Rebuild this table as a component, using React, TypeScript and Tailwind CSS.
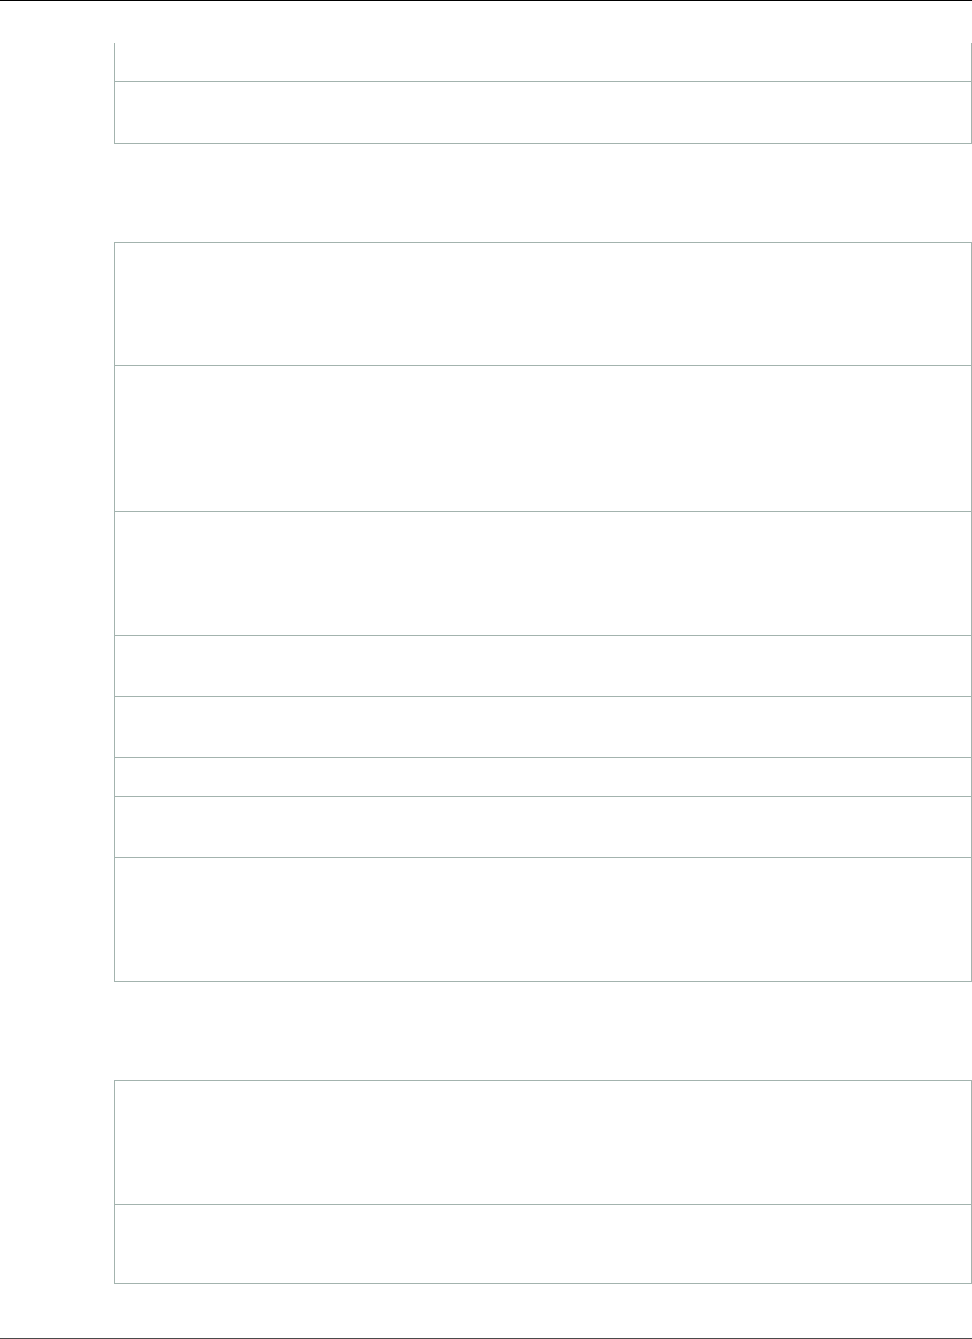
const tables: { top: boolean; rows: string[] }[] = [
  { top: false, rows: ["h-[39px]", "h-[62px]"] },
  {
    top: true,
    rows: [
      "h-[123px]",
      "h-[146px]",
      "h-[124px]",
      "h-[61px]",
      "h-[61px]",
      "h-[39px]",
      "h-[61px]",
      "h-[124px]",
    ],
  },
  { top: true, rows: ["h-[124px]", "h-[79px]"] },
];

function Table({ top, rows }: { top: boolean; rows: string[] }) {
  return (
    <div
      className={`ml-[114px] border-x border-[#a3b3ae] ${
        top ? "border-t" : ""
      }`}
    >
      {rows.map((h, i) => (
        <div key={i} className={`border-b border-[#a3b3ae] ${h}`} />
      ))}
    </div>
  );
}

export default function App() {
  return (
    <div
      className="w-[972px] h-[1339px] bg-white flex flex-col"
      style={{ fontFamily: "Liberation Sans, Arial, sans-serif" }}
    >
      {/* Page header rule */}
      <div className="h-px bg-black" />

      <div className="mt-[42px]">
        <Table {...tables[0]} />
      </div>
      <div className="mt-[98px]">
        <Table {...tables[1]} />
      </div>
      <div className="mt-[98px]">
        <Table {...tables[2]} />
      </div>

      {/* Footer rule */}
      <div className="mt-auto h-px bg-[#4a4a4a]" />
    </div>
  );
}
